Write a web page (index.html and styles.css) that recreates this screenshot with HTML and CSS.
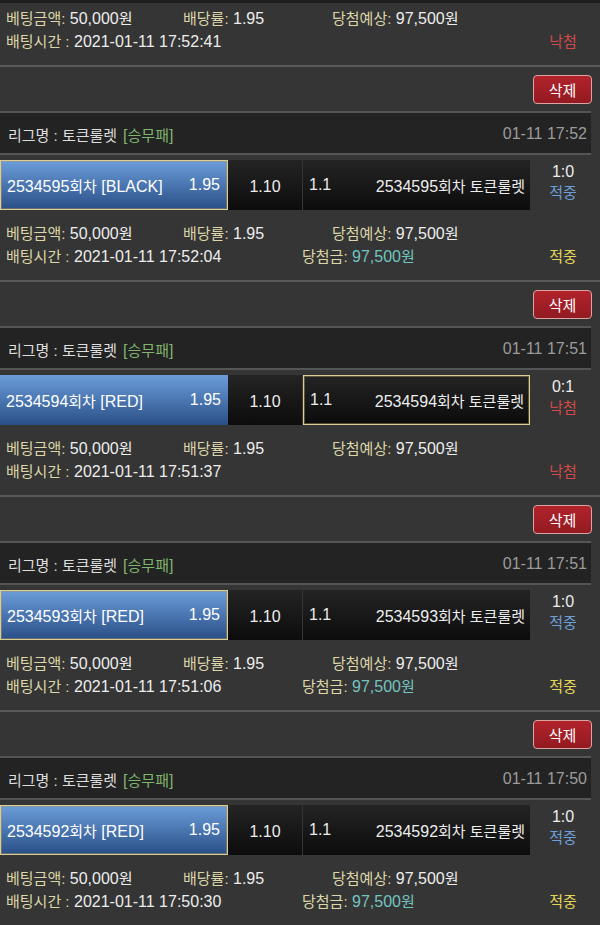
FILE: index.html
```html
<!DOCTYPE html>
<html lang="ko">
<head>
<meta charset="utf-8">
<title>배팅내역</title>
<link rel="stylesheet" href="styles.css">
</head>
<body>
<div class="topstrip"></div>
<div class="info first">
  <div class="irow">
    <span class="c1"><span class="lbl">베팅금액:</span> 50,000<span class="k">원</span></span>
    <span class="c2"><span class="lbl">배당률:</span> 1.95</span>
    <span class="c3"><span class="lbl">당첨예상:</span> 97,500<span class="k">원</span></span>
  </div>
  <div class="irow">
    <span class="d1"><span class="lbl">배팅시간 :</span> 2021-01-11 17:52:41</span>
    <span class="d2"></span>
    <span class="res lose">낙첨</span>
  </div>
</div>

<div class="slip">
  <div class="head"><button class="del">삭제</button></div>
  <div class="league"><span class="lname">리그명 : 토큰룰렛</span><span class="ltype">[<span class="k">승무패</span>]</span><span class="ltime">01-11 17:52</span></div>
  <div class="bet">
    <div class="home picked"><span>2534595<span class="k">회차</span> [BLACK]</span><span>1.95</span></div>
    <div class="draw">1.10</div>
    <div class="away"><span>1.1</span><span>2534595<span class="k">회차 토큰룰렛</span></span></div>
    <div class="score"><span>1:0</span><span class="k win">적중</span></div>
  </div>
  <div class="info">
    <div class="irow">
      <span class="c1"><span class="lbl">베팅금액:</span> 50,000<span class="k">원</span></span>
      <span class="c2"><span class="lbl">배당률:</span> 1.95</span>
      <span class="c3"><span class="lbl">당첨예상:</span> 97,500<span class="k">원</span></span>
    </div>
    <div class="irow">
      <span class="d1"><span class="lbl">배팅시간 :</span> 2021-01-11 17:52:04</span>
      <span class="d2"><span class="lbl">당첨금:</span> <span class="prize">97,500<span class="k">원</span></span></span>
      <span class="res hit">적중</span>
    </div>
  </div>
</div>

<div class="slip">
  <div class="head"><button class="del">삭제</button></div>
  <div class="league"><span class="lname">리그명 : 토큰룰렛</span><span class="ltype">[<span class="k">승무패</span>]</span><span class="ltime">01-11 17:51</span></div>
  <div class="bet">
    <div class="home"><span>2534594<span class="k">회차</span> [RED]</span><span>1.95</span></div>
    <div class="draw">1.10</div>
    <div class="away picked"><span>1.1</span><span>2534594<span class="k">회차 토큰룰렛</span></span></div>
    <div class="score"><span>0:1</span><span class="k lose">낙첨</span></div>
  </div>
  <div class="info">
    <div class="irow">
      <span class="c1"><span class="lbl">베팅금액:</span> 50,000<span class="k">원</span></span>
      <span class="c2"><span class="lbl">배당률:</span> 1.95</span>
      <span class="c3"><span class="lbl">당첨예상:</span> 97,500<span class="k">원</span></span>
    </div>
    <div class="irow">
      <span class="d1"><span class="lbl">배팅시간 :</span> 2021-01-11 17:51:37</span>
      <span class="d2"></span>
      <span class="res lose">낙첨</span>
    </div>
  </div>
</div>

<div class="slip">
  <div class="head"><button class="del">삭제</button></div>
  <div class="league"><span class="lname">리그명 : 토큰룰렛</span><span class="ltype">[<span class="k">승무패</span>]</span><span class="ltime">01-11 17:51</span></div>
  <div class="bet">
    <div class="home picked"><span>2534593<span class="k">회차</span> [RED]</span><span>1.95</span></div>
    <div class="draw">1.10</div>
    <div class="away"><span>1.1</span><span>2534593<span class="k">회차 토큰룰렛</span></span></div>
    <div class="score"><span>1:0</span><span class="k win">적중</span></div>
  </div>
  <div class="info">
    <div class="irow">
      <span class="c1"><span class="lbl">베팅금액:</span> 50,000<span class="k">원</span></span>
      <span class="c2"><span class="lbl">배당률:</span> 1.95</span>
      <span class="c3"><span class="lbl">당첨예상:</span> 97,500<span class="k">원</span></span>
    </div>
    <div class="irow">
      <span class="d1"><span class="lbl">배팅시간 :</span> 2021-01-11 17:51:06</span>
      <span class="d2"><span class="lbl">당첨금:</span> <span class="prize">97,500<span class="k">원</span></span></span>
      <span class="res hit">적중</span>
    </div>
  </div>
</div>

<div class="slip">
  <div class="head"><button class="del">삭제</button></div>
  <div class="league"><span class="lname">리그명 : 토큰룰렛</span><span class="ltype">[<span class="k">승무패</span>]</span><span class="ltime">01-11 17:50</span></div>
  <div class="bet">
    <div class="home picked"><span>2534592<span class="k">회차</span> [RED]</span><span>1.95</span></div>
    <div class="draw">1.10</div>
    <div class="away"><span>1.1</span><span>2534592<span class="k">회차 토큰룰렛</span></span></div>
    <div class="score"><span>1:0</span><span class="k win">적중</span></div>
  </div>
  <div class="info">
    <div class="irow">
      <span class="c1"><span class="lbl">베팅금액:</span> 50,000<span class="k">원</span></span>
      <span class="c2"><span class="lbl">배당률:</span> 1.95</span>
      <span class="c3"><span class="lbl">당첨예상:</span> 97,500<span class="k">원</span></span>
    </div>
    <div class="irow">
      <span class="d1"><span class="lbl">배팅시간 :</span> 2021-01-11 17:50:30</span>
      <span class="d2"><span class="lbl">당첨금:</span> <span class="prize">97,500<span class="k">원</span></span></span>
      <span class="res hit">적중</span>
    </div>
  </div>
</div>
</body>
</html>
```
FILE: styles.css
```css
* { box-sizing: border-box; }
html, body { margin: 0; padding: 0; }
body {
  background: #353535;
  color: #ededed;
  font-family: "Liberation Sans", Arial, "Noto Sans CJK KR", sans-serif;
  font-size: 16px;
  width: 600px;
  height: 925px;
  overflow: hidden;
}
.k { font-size: 15px; }
.topstrip { height: 3px; background: #1e1e1e; }

.info { padding: 12px 4px 12px 6px; }
.info.first { padding-top: 4px; }
.irow { display: flex; height: 23px; line-height: 23px; white-space: nowrap; }
.c1 { width: 177px; }
.c2 { width: 149px; }
.c3 { flex: 1; }
.d1 { width: 296px; }
.d2 { flex: 1; }
.lbl { color: #dcd6a8; font-size: 15px; }
.prize { color: #72c4c0; }
.res { width: 66px; text-align: center; font-size: 15px; }
.hit { color: #e3d55a; }
.lose { color: #d24a4a; }
.win { color: #6d9fd8; }

.slip { border-top: 2px solid #595959; }
.head { display: flex; justify-content: flex-end; padding: 8px 8px 7px; }
.del {
  width: 59px;
  height: 29px;
  padding: 0;
  border: 1px solid #dba3a3;
  border-radius: 4px;
  background: linear-gradient(#b1232b, #931a21);
  color: #fff;
  font-family: "Liberation Sans", "Noto Sans CJK KR", sans-serif;
  font-size: 15px;
}
.league {
  display: flex;
  align-items: center;
  height: 44px;
  margin-right: 9px;
  padding: 2px 4px 0 8px;
  background: #232323;
  border-top: 2px solid #555;
  border-bottom: 2px solid #555;
}
.lname { color: #dedede; font-size: 15px; }
.ltype { color: #7fb56d; margin-left: 6px; }
.ltime { margin-left: auto; color: #9c9c9c; }

.bet {
  display: grid;
  grid-template-columns: 228px 75px 227px 1fr;
  height: 50px;
  margin-top: 5px;
}
.home, .away, .draw {
  display: flex;
  align-items: center;
  justify-content: space-between;
  white-space: nowrap;
}
.home {
  padding: 0 7px 0 6px;
  background: linear-gradient(#6b9dda, #2a4f87);
  color: #fff;
}
.draw {
  justify-content: center;
  padding-top: 4px;
  font-size: 16px;
  background: linear-gradient(#242424, #0c0c0c);
  border-right: 1px solid #353535;
}
.away {
  padding: 0 5px 0 6px;
  background: linear-gradient(#242424, #0c0c0c);
}
.picked {
  border: 1px solid #dccd94;
  box-shadow: inset 0 0 0 1px rgba(170, 150, 90, 0.45);
}
.score {
  display: flex;
  flex-direction: column;
  align-items: center;
  padding: 1px 4px 0 0;
  line-height: 21px;
}
```
